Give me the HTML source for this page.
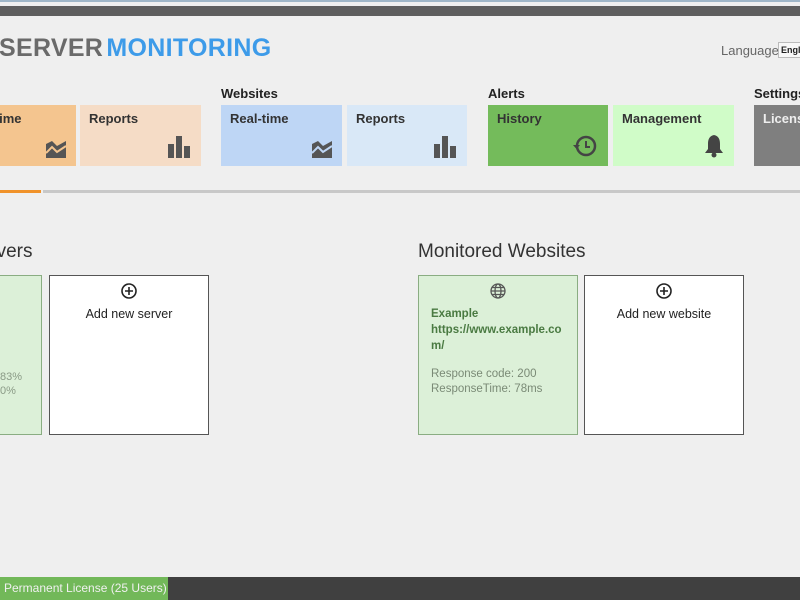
<!DOCTYPE html>
<html><head><style>
body{margin:0;width:800px;height:600px;overflow:hidden;background:#efefef;font-family:"Liberation Sans",sans-serif;position:relative;color:#222}
.a{position:absolute}
.tile{position:absolute;top:105px;height:61px;width:121px;font-size:13px;font-weight:bold;color:#333}
.tile span{position:absolute;left:9px;top:6px}
.tile svg{position:absolute;right:10px;bottom:8px}
.lbl{position:absolute;top:86px;font-size:13px;font-weight:bold;color:#222}
.card{position:absolute;top:275px;height:158px;width:158px;border:1px solid #555;background:#fff;font-size:12.5px;text-align:center}
</style></head><body>
<div class="a" style="left:0;top:0;width:800px;height:2px;background:#9fb6c8"></div>
<div class="a" style="left:0;top:6px;width:800px;height:10px;background:#5e5e5e"></div>
<div class="a" style="left:-1px;top:34px;font-size:25px;font-weight:bold;letter-spacing:0.3px;white-space:nowrap"><span style="color:#6a6a6a">SERVER</span> <span style="color:#3d9be9;margin-left:-4px">MONITORING</span></div>
<div class="a" style="left:721px;top:43px;font-size:13px;color:#666">Language</div>
<div class="a" style="left:778px;top:42px;width:30px;height:14px;border:1px solid #bbb;background:#f8f8f8;font-size:9px;font-weight:bold;line-height:14px;padding-left:2px">English</div>
<div class="lbl" style="left:221px">Websites</div>
<div class="lbl" style="left:488px">Alerts</div>
<div class="lbl" style="left:754px">Settings</div>
<div class="tile" style="left:-45px;background:#f4c58f"><span style="left:8px">Real-time</span><svg width="20" height="20" viewBox="0 0 20 20"><path d="M0 6L6 3 11 8 20 3V20H0Z" fill="#555"/><path d="M0 15L6 9 11 14 20 8" stroke="#f4c58f" stroke-width="2" fill="none"/></svg></div>
<div class="tile" style="left:80px;background:#f5dcc6"><span>Reports</span><svg width="23" height="22"><rect x="0" y="8" width="6" height="14" fill="#555"/><rect x="8" y="0" width="6" height="22" fill="#555"/><rect x="16" y="10" width="6" height="12" fill="#555"/></svg></div>
<div class="tile" style="left:221px;background:#bed6f5"><span>Real-time</span><svg width="20" height="20" viewBox="0 0 20 20"><path d="M0 6L6 3 11 8 20 3V20H0Z" fill="#555"/><path d="M0 15L6 9 11 14 20 8" stroke="#bed6f5" stroke-width="2" fill="none"/></svg></div>
<div class="tile" style="left:347px;width:120px;background:#d9e8f7"><span>Reports</span><svg width="23" height="22"><rect x="0" y="8" width="6" height="14" fill="#555"/><rect x="8" y="0" width="6" height="22" fill="#555"/><rect x="16" y="10" width="6" height="12" fill="#555"/></svg></div>
<div class="tile" style="left:488px;width:120px;background:#74bb5b"><span>History</span><svg width="26" height="24" viewBox="0 0 26 24"><circle cx="14" cy="12" r="9" stroke="#444" stroke-width="2.5" fill="none"/><path d="M1 11h7l-3.5 4z" fill="#444"/><path d="M14 7v6h4" stroke="#444" stroke-width="2" fill="none"/></svg></div>
<div class="tile" style="left:613px;background:#d0fcc8"><span>Management</span><svg width="20" height="24" viewBox="0 0 20 24"><path d="M10 1C5 2 4 6 4 10V15L1 19H19L16 15V10C16 6 15 2 10 1Z" fill="#444"/><circle cx="10" cy="21" r="2.5" fill="#444"/></svg></div>
<div class="tile" style="left:754px;width:60px;background:#7f7f7f;color:#eee"><span>Licensing</span></div>
<div class="a" style="left:0;top:190px;width:41px;height:3px;background:#f0922a"></div>
<div class="a" style="left:43px;top:190px;width:757px;height:3px;background:#c8c8c8"></div>
<div class="a" style="left:-33px;top:241px;font-size:19px;color:#333">Servers</div>
<div class="a" style="left:418px;top:241px;font-size:19px;color:#333">Monitored Websites</div>
<div class="card" style="left:-118px;background:#dcf0d8;border-color:#8aad82;color:#8a9a86;text-align:left"><div style="position:absolute;left:117px;top:94px;font-size:11px;line-height:14px">83%<br>0%</div></div>
<div class="card" style="left:49px"><svg width="18" height="18" style="margin-top:6px"><circle cx="9" cy="9" r="7" stroke="#222" stroke-width="1.6" fill="none"/><path d="M9 5v8M5 9h8" stroke="#222" stroke-width="1.6"/></svg><div style="margin-top:4px">Add new server</div></div>
<div class="card" style="left:418px;background:#dcf0d8;border-color:#8aad82;text-align:left"><svg width="18" height="18" style="position:absolute;left:70px;top:6px" viewBox="0 0 18 18" fill="none" stroke="#555" stroke-width="1.3"><circle cx="9" cy="9" r="7"/><ellipse cx="9" cy="9" rx="3" ry="7"/><path d="M2 9h14M3 5.5h12M3 12.5h12"/></svg><div style="position:absolute;left:12px;top:30px;width:140px;font-size:11.5px;font-weight:bold;color:#4a7a42;line-height:16px">Example<br>https://www.example.co<br>m/</div><div style="position:absolute;left:12px;top:91px;font-size:11.5px;color:#7a8a76;line-height:15px">Response code: 200<br>ResponseTime: 78ms</div></div>
<div class="card" style="left:584px"><svg width="18" height="18" style="margin-top:6px"><circle cx="9" cy="9" r="7" stroke="#222" stroke-width="1.6" fill="none"/><path d="M9 5v8M5 9h8" stroke="#222" stroke-width="1.6"/></svg><div style="margin-top:4px">Add new website</div></div>
<div class="a" style="left:0;top:577px;width:800px;height:23px;background:#404040"></div>
<div class="a" style="left:0;top:577px;width:168px;height:23px;background:#72b859;font-size:12px;line-height:23px;padding-left:4px;box-sizing:border-box;color:#f0f0f0">Permanent License (25 Users)</div>
</body></html>
